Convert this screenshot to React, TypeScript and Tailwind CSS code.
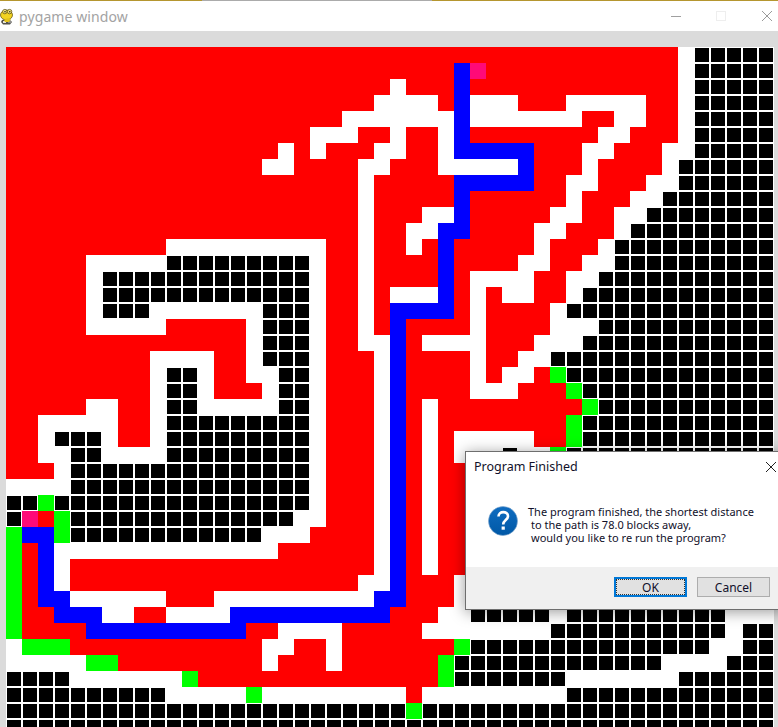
// each row: colour letter + last column it reaches (inclusive)
const rows = [
  "r41 w42 k47",
  "r27 b28 p29 r41 w42 k47",
  "r23 w24 r27 b28 r41 w42 k47",
  "r22 w26 r27 b28 w31 r34 w39 r41 w42 k47",
  "r20 w27 b28 w35 r37 w39 r41 w42 k47",
  "r18 w21 r23 w24 r26 w27 b28 r36 w38 r41 w42 k47",
  "r16 w17 r18 w19 r22 w24 r26 w27 b32 r35 w37 r40 w42 k47",
  "r15 w17 r21 w23 r26 w31 b32 r35 w36 r40 w41 k47",
  "r21 w22 r27 b32 r34 w36 r39 w41 k47",
  "r21 w22 r27 b28 r34 w35 r38 w40 k47",
  "r21 w22 r25 w27 b28 r33 w35 r37 w39 k47",
  "r21 w22 r24 w26 b28 r32 w34 r37 w38 k47",
  "r9 w19 r21 w22 r24 w25 r26 b27 r32 w33 r36 w37 k47",
  "r4 w9 k18 w19 r21 w22 r26 b27 r31 w33 r35 w37 k47",
  "r4 w5 k18 w19 r21 w22 r26 b27 r28 w32 r34 w36 k47",
  "r4 w5 k18 w19 r21 w22 r23 w26 b27 r28 w29 r30 w32 r34 w35 k47",
  "r4 w5 k8 w15 k18 w19 r21 w22 r23 b27 r28 w29 r33 w34 k47",
  "r4 w9 r14 w15 k18 w19 r21 w22 r23 b24 r28 w29 r33 w36 k47",
  "r14 w15 k18 w19 r21 w23 b24 r25 w29 r32 w35 k47",
  "r8 w12 r14 w15 k18 w19 r22 w23 b24 r28 w29 r31 w33 k47",
  "r8 w9 k11 w12 r14 w16 k18 w19 r22 w23 b24 r28 w29 r30 w32 r33 g34 k47",
  "r8 w9 k11 w12 r15 w16 k18 w19 r22 w23 b24 r28 w31 r34 g35 k47",
  "r4 w6 r8 w9 k11 w16 k18 w19 r22 w23 b24 r25 w26 r35 g36 k47",
  "r1 w6 r8 w9 k18 w19 r22 w23 b24 r25 w26 r34 g35 k47",
  "r1 w2 k5 w6 r8 w9 k18 w19 r22 w23 b24 r25 w26 r27 w32 r34 g35 k47",
  "r1 w3 k5 w9 k18 w19 r22 w23 b24 r25 w26 r27 w30 k31 w33 g34 k47",
  "r2 w3 k18 w19 r22 w23 b24 r25 w26 r28 k47",
  "w3 k18 w19 r22 w23 b24 r25 w26 r28 k47",
  "k1 g2 k18 w19 r22 w23 b24 r25 w26 r28 k47",
  "k0 p1 r2 g3 k17 w19 r22 w23 b24 r25 w26 r28 k47",
  "g0 b2 g3 k15 w18 r22 w23 b24 r25 w26 r28 k47",
  "g0 r1 b2 w16 r22 w23 b24 r25 w26 r28 k47",
  "g0 r1 b2 w3 r22 w23 b24 r25 w26 r28 k47",
  "g0 r1 b2 w3 r21 w23 b24 r27 w28 k47",
  "g0 r1 b3 w9 r12 w22 b24 r27 w28 k47",
  "g0 r2 b5 w7 r9 w13 b23 r26 w28 k33 w34 k44 w47",
  "g0 r4 b14 r16 w20 r25 w33 k44 w45 k47",
  "w0 g3 r15 w17 r19 w20 r27 g28 k43 w45 k47",
  "w4 g6 r15 w16 r19 w20 r26 g27 k40 w44 k47",
  "k3 w10 g11 r26 g27 k34 w41 k47",
  "k9 w14 g15 w24 r25 w34 k47",
  "k24 g25 k47",
  "k47",
];

const cellClass: Record<string, string> = {
  r: "bg-[#ff0000]",
  w: "bg-white",
  k: "bg-black border border-white",
  b: "bg-[#0000ff]",
  g: "bg-[#00ff00]",
  p: "bg-[#ff0a78]",
};

function expandRow(row: string) {
  const cells: string[] = [];
  row.split(" ").forEach((run) => {
    const last = parseInt(run.slice(1), 10);
    while (cells.length <= last) cells.push(run[0]);
  });
  return cells;
}

function Board() {
  return (
    <div className="grid grid-cols-[repeat(48,16px)] auto-rows-[16px] ml-[6px] mt-4 w-[768px]">
      {rows.map((row, r) =>
        expandRow(row).map((c, i) => <div key={r + "-" + i} className={cellClass[c]} />)
      )}
    </div>
  );
}

function PygameIcon() {
  return (
    <svg width="14" height="17" viewBox="0 0 14 17" className="shrink-0">
      <path d="M2 12 L9 11 L12 14 L10 16.5 L3 16.5 L1 14 Z" fill="#55524a" />
      <path d="M3 13 h3 v2 h-3 Z" fill="#e8e6d8" />
      <path d="M8 13 h3 v2 h-3 Z" fill="#8f8f8f" />
      <ellipse cx="6.5" cy="7" rx="6" ry="5" fill="#f2d320" stroke="#6b5a10" strokeWidth="0.8" />
      <path d="M4 12 Q7 9 11 11 L9 14 L5 14 Z" fill="#e3c21a" />
      <circle cx="4.8" cy="3.6" r="2.2" fill="#f8e878" stroke="#55480c" strokeWidth="0.7" />
      <circle cx="9.6" cy="3.6" r="2.2" fill="#f8e878" stroke="#55480c" strokeWidth="0.7" />
      <circle cx="5" cy="3.8" r="0.8" fill="#222" />
      <circle cx="9.8" cy="3.8" r="0.8" fill="#222" />
    </svg>
  );
}

function TitleBar() {
  return (
    <div className="relative flex h-[31px] items-center bg-white border-t border-[#b5962f]">
      <div className="flex items-center gap-[5px] pt-px">
        <PygameIcon />
        <span className="text-[14px] tracking-[0.1px] text-[#a3a3a3] font-['Noto_Sans',sans-serif]">pygame window</span>
      </div>
      <div className="ml-auto flex h-full items-center">
        <div className="w-[10px] h-px bg-[#a0a0a0] mr-[35px]" />
        <div className="w-[10px] h-[10px] border border-[#eeeeee] mr-[36px]" />
        <svg width="10" height="10" viewBox="0 0 10 10" className="mr-[6px]">
          <path d="M0 0 L10 10 M10 0 L0 10" stroke="#9a9a9a" strokeWidth="1" />
        </svg>
      </div>
      <div className="absolute left-[202px] -top-px h-px w-[230px] bg-[#ababab]" />
    </div>
  );
}

function QuestionIcon() {
  return (
    <svg width="30" height="30" viewBox="0 0 30 30" className="shrink-0">
      <defs>
        <linearGradient id="q" x1="0" y1="0" x2="0" y2="1">
          <stop offset="0" stopColor="#0f6cc0" />
          <stop offset="1" stopColor="#0058a6" />
        </linearGradient>
      </defs>
      <circle cx="15" cy="15" r="14.5" fill="url(#q)" stroke="#7fa6cc" strokeWidth="0.6" />
      <path d="M10.5 10.5 C10.5 4.5 20 4.8 20 10.2 C20 14 15.2 14.2 15.2 18.5" fill="none" stroke="#ffffff" strokeWidth="2.6" />
      <rect x="13.6" y="20.5" width="3.2" height="3.2" fill="#ffffff" />
    </svg>
  );
}

function Dialog() {
  return (
    <div className="absolute left-[465px] top-[451px] flex h-[159px] w-[320px] flex-col border border-[#6e6e6e] bg-white text-[#10102a] font-['Noto_Sans',sans-serif] shadow-[0_2px_14px_rgba(0,0,0,0.4)]">
      <div className="flex h-[29px] items-center pl-2 pt-[1px] text-[12.5px]">
        <span>Program Finished</span>
        <svg width="10" height="10" viewBox="0 0 10 10" className="ml-[188px]">
          <path d="M0 0 L10 10 M10 0 L0 10" stroke="#222222" strokeWidth="1" />
        </svg>
      </div>
      <div className="flex flex-1 items-start pl-[22px] pt-[25px]">
        <QuestionIcon />
        <div className="ml-[10px] -mt-px text-[11px] leading-[13px] whitespace-pre">
          <div>The program finished, the shortest distance</div>
          <div className="pl-[3px]">to the path is 78.0 blocks away,</div>
          <div className="pl-[3px]">would you like to re run the program?</div>
        </div>
      </div>
      <div className="flex h-[42px] items-start gap-[10px] bg-[#f0f0f0] pl-[148px] pt-[10px] text-[12px]">
        <button className="flex h-5 w-[73px] items-center justify-center border-2 border-[#0078d7] bg-[#e1e1e1] pt-px outline-1 -outline-offset-3 outline-dotted outline-[#333333]">
          OK
        </button>
        <button className="flex h-5 w-[73px] items-center justify-center border border-[#adadad] bg-[#e1e1e1] pt-px">
          Cancel
        </button>
      </div>
    </div>
  );
}

export default function App() {
  return (
    <div className="relative h-[727px] w-[778px] overflow-hidden bg-[#dbdbdb]">
      <TitleBar />
      <Board />
      <Dialog />
    </div>
  );
}
